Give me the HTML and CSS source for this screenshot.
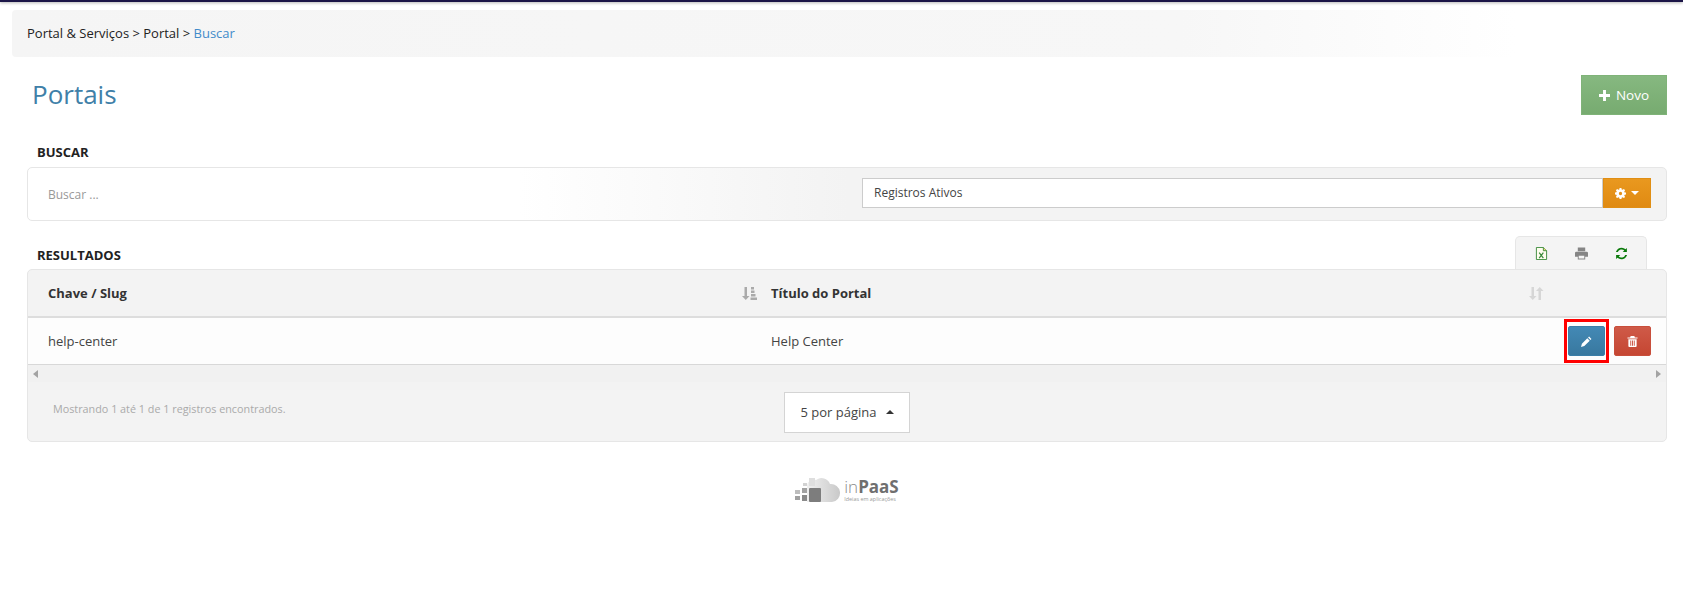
FILE: index.html
```html
<!DOCTYPE html>
<html lang="en">
<head>
    <meta charset="UTF-8">
    <title>Portais</title>
    <link rel="stylesheet" href="styles.css">
</head>
<body>
    <div class="top-bar"></div>

    <div class="breadcrumb">
        <span>Portal &amp; Serviços</span> &gt; <span>Portal</span> &gt; <a href="#" class="current">Buscar</a>
    </div>

    <div class="page">
        <div class="page-header">
            <h1>Portais</h1>
            <button class="btn-new">
                <svg class="icon-plus" viewBox="0 0 12 12"><path d="M4.400 0h3.200v4.400H12v3.200H7.600V12H4.400V7.600H0V4.400h4.400z"/></svg>
                Novo
            </button>
        </div>

        <h2 class="section-title search-title">BUSCAR</h2>
        <div class="search-panel">
            <span class="search-placeholder">Buscar ...</span>
            <div class="filter-group">
                <div class="filter-input">Registros Ativos</div>
                <button class="btn-gear">
                    <svg class="icon-gear" viewBox="0 0 12 12"><path fill-rule="evenodd" d="M5 0h2l.3 1.600 1 .4L9.700 1.100l1.300 1.300-.9 1.400.4 1L12 5v2l-1.500.3-.4 1 .9 1.400-1.300 1.300-1.400-.9-1 .4L7 12H5l-.3-1.500-1-.4-1.400.9L1 9.700l.9-1.400-.4-1L0 7V5l1.500-.3.4-1L1 2.400 2.300 1.100l1.400.9 1-.4zM6 4.200a1.800 1.800 0 1 0 0 3.600 1.800 1.800 0 0 0 0-3.600z"/></svg>
                    <span class="caret"></span>
                </button>
            </div>
        </div>

        <div class="results-header">
            <h2 class="section-title">RESULTADOS</h2>
            <div class="toolbar">
                <svg class="tool" viewBox="0 0 12 14"><path d="M.5.500h7.500l3.500 3.500v9.500H.5z" fill="#fffdf0" stroke="#3a8a3a"/><path d="M8 .5v3.500h3.500" fill="#f0d878" stroke="#3a8a3a"/><path d="M3.500 6l4.500 6M8 6l-4.500 6" stroke="#3a8a3a" stroke-width="1.300"/></svg>
                <svg class="tool" viewBox="0 0 14 13"><path d="M3 0h8v4H3zM1.500 4.500h11A1.500 1.500 0 0 1 14 6v4h-3v3H3v-3H0V6a1.500 1.500 0 0 1 1.500-1.500zM4 9v3h6V9z" fill="#858585"/></svg>
                <svg class="tool" viewBox="0 0 14 14"><path d="M12.800 1v4.500H8.300l1.700-1.700A4.300 4.300 0 0 0 3 5.500H1A6.300 6.300 0 0 1 11.300 2.500zM1.200 13V8.500h4.500L4 10.200a4.300 4.300 0 0 0 7-1.700h2A6.300 6.300 0 0 1 2.700 11.500z" fill="#0a7a0a"/></svg>
            </div>
        </div>

        <div class="results-panel">
            <div class="table-row table-head">
                <div class="col-slug">
                    <span>Chave / Slug</span>
                    <svg class="sort" viewBox="0 0 15 13"><path d="M2.500 0h2.500v9h2.500L3.750 13 0 9h2.500z"/><path d="M9 0h3v2.500H9zM9 3.500h3.500V6H9zM9 7h4.500v2.500H9zM8.500 10.500H15V13H8.500z"/></svg>
                </div>
                <div class="col-title">
                    <span>Título do Portal</span>
                    <svg class="sort sort-off" viewBox="0 0 15 13"><path d="M2.500 0h2.500v9h2.500L3.750 13 0 9h2.500z"/><path d="M9.500 13H12V4h2.500L10.750 0 7 4h2.500z"/></svg>
                </div>
                <div class="col-actions"></div>
            </div>
            <div class="table-row table-body">
                <div class="col-slug">help-center</div>
                <div class="col-title">Help Center</div>
                <div class="col-actions">
                    <div class="highlight">
                        <button class="btn-action btn-edit">
                            <svg viewBox="0 0 12 12"><path d="M8.800.600l2.600 2.600-1.100 1.100-2.600-2.600zM6.900 2.500l2.600 2.600L3.600 11 0 12l1-3.600z"/></svg>
                        </button>
                    </div>
                    <button class="btn-action btn-delete">
                        <svg viewBox="0 0 12 12"><path fill-rule="evenodd" d="M4 0h4l.6 1.500H11.500v1.200H.5V1.500h2.900zM1.500 3.500h9V11a1 1 0 0 1-1 1h-7a1 1 0 0 1-1-1zM3.600 5v5.500h1V5zM5.500 5v5.500h1V5zM7.400 5v5.500h1V5z"/></svg>
                    </button>
                </div>
            </div>
            <div class="scrollbar">
                <span class="arrow-left"></span>
                <span class="arrow-right"></span>
            </div>
            <div class="table-footer">
                <span class="records">Mostrando 1 até 1 de 1 registros encontrados.</span>
                <button class="page-size">5 por página <span class="caret-up"></span></button>
            </div>
        </div>

        <div class="logo">
            <svg class="logo-cloud" viewBox="0 0 46 27">
                <defs>
                    <linearGradient id="cloud-fill" x1="0" y1="0" x2="1" y2="0">
                        <stop offset="0" stop-color="#f0f0f0"/>
                        <stop offset="1" stop-color="#c9c9c9"/>
                    </linearGradient>
                </defs>
                <path d="M12 26V9a7 7 0 0 1 9-5 9 9 0 0 1 14 4 9 9 0 0 1 2 18z" fill="url(#cloud-fill)"/>
                <rect x="14" y="12" width="12" height="14" rx="1" fill="#7d7d7d"/>
                <rect x="7" y="12" width="5" height="5" fill="#a2a2a2"/>
                <rect x="7" y="19" width="5" height="6" fill="#8a8a8a"/>
                <rect x="0" y="14" width="5" height="4" fill="#bdbdbd"/>
                <rect x="0" y="20" width="5" height="4" fill="#a0a0a0"/>
                <rect x="14" y="2" width="6" height="8" fill="#dedede"/>
                <rect x="8" y="7" width="4" height="3" fill="#d2d2d2"/>
            </svg>
            <div class="logo-text">
                <div class="logo-name"><span class="logo-in">in</span><b>PaaS</b></div>
                <div class="logo-slogan">Ideias em aplicações</div>
            </div>
        </div>
    </div>
</body>
</html>
```

FILE: styles.css
```css
* {
    box-sizing: border-box;
}

body {
    margin: 0;
    font-family: "Open Sans", sans-serif;
    font-size: 13px;
    color: #333;
    background-color: #fff;
}

button {
    font-family: inherit;
    cursor: pointer;
}

.top-bar {
    height: 2px;
    background-color: #1b1547;
    box-shadow: 0 1px 3px rgba(0, 0, 0, 0.35);
}

.breadcrumb {
    height: 47px;
    margin: 8px 0 0 12px;
    padding-left: 15px;
    line-height: 47px;
    color: #222;
    background: linear-gradient(to right, #f5f5f5, #f7f7f7 70%, #fff 90%);
    border-radius: 4px 0 0 4px;
}

.current {
    color: #428bca;
    text-decoration: none;
}

.page {
    padding: 0 16px 0 27px;
}

.page-header {
    display: flex;
    justify-content: space-between;
    align-items: center;
    height: 40px;
    margin-top: 18px;
}

h1 {
    margin: 0 0 2px 5px;
    font-size: 26px;
    font-weight: 400;
    color: #4080a8;
}

.btn-new {
    display: flex;
    align-items: center;
    justify-content: center;
    gap: 6px;
    width: 86px;
    height: 40px;
    font-size: 13.500px;
    color: #fff;
    background: linear-gradient(#86b880, #77ab70);
    border: 1px solid #7fb378;
}

.icon-plus {
    width: 11px;
    height: 11px;
    fill: #fff;
}

.section-title {
    margin: 0;
    padding-left: 10px;
    font-size: 13px;
    font-weight: 700;
    color: #222;
}

.search-title {
    margin-top: 25px;
    padding-bottom: 3px;
    line-height: 24px;
}

.search-panel {
    display: flex;
    justify-content: space-between;
    align-items: center;
    height: 54px;
    padding: 0 15px 0 20px;
    background: linear-gradient(to right, #fff, #fff 30%, #f3f3f3 50%);
    border: 1px solid #e6e6e6;
    border-radius: 5px;
}

.search-placeholder {
    font-size: 12px;
    color: #999;
}

.filter-group {
    display: flex;
    width: 789px;
    height: 30px;
    margin-bottom: 2px;
}

.filter-input {
    flex: 1;
    padding-left: 11px;
    font-size: 12px;
    line-height: 28px;
    color: #444;
    background-color: #fff;
    border: 1px solid #ccc;
}

.btn-gear {
    display: flex;
    align-items: center;
    justify-content: center;
    gap: 5px;
    width: 48px;
    padding: 0;
    background: linear-gradient(#e9981f, #e08a12);
    border: 1px solid #e08e14;
}

.icon-gear {
    width: 11px;
    height: 11px;
    fill: #fff;
}

.caret {
    border-top: 4px solid #fff;
    border-left: 4px solid transparent;
    border-right: 4px solid transparent;
}

.results-header {
    display: flex;
    justify-content: space-between;
    align-items: flex-end;
    height: 48px;
    padding-right: 20px;
}

.results-header .section-title {
    line-height: 24px;
    margin-bottom: 2px;
}

.toolbar {
    display: flex;
    align-items: center;
    justify-content: space-around;
    width: 132px;
    height: 33px;
    padding: 0 5px;
    background-color: #f4f4f4;
    border: 1px solid #e6e6e6;
    border-bottom: none;
    border-radius: 5px 5px 0 0;
}

.tool {
    width: 13px;
    height: 13px;
}

.results-panel {
    height: 173px;
    background-color: #f3f3f3;
    border: 1px solid #e6e6e6;
    border-radius: 5px;
}

.table-row {
    display: flex;
    align-items: center;
}

.table-head {
    height: 48px;
    font-weight: 700;
    font-size: 13px;
    border-bottom: 2px solid #ddd;
}

.table-body {
    height: 47px;
    font-size: 13px;
    color: #444;
    background-color: #fdfdfd;
    border-bottom: 1px solid #d8d8d8;
}

.col-slug {
    display: flex;
    justify-content: space-between;
    align-items: center;
    width: 743px;
    padding: 0 14px 0 20px;
}

.col-title {
    display: flex;
    justify-content: space-between;
    align-items: center;
    width: 794px;
    padding-right: 21px;
}

.col-actions {
    flex: 1;
    display: flex;
    align-items: center;
    gap: 5px;
}

.sort {
    width: 15px;
    height: 13px;
    fill: #aaa;
}

.sort-off {
    fill: #d6d6d6;
}

.highlight {
    display: flex;
    align-items: center;
    justify-content: center;
    width: 45px;
    height: 44px;
    margin-left: -1px;
    border: 3px solid #f00;
}

.btn-action {
    display: flex;
    align-items: center;
    justify-content: center;
    width: 37px;
    height: 30px;
    padding: 0;
    border-radius: 2px;
}

.btn-action svg {
    width: 11px;
    height: 11px;
    fill: #fff;
}

.btn-edit {
    background: linear-gradient(#4389b5, #38789f);
    border: 1px solid #3b7ea8;
}

.btn-delete {
    background: linear-gradient(#cf5a48, #c54632);
    border: 1px solid #c84e3b;
}

.scrollbar {
    display: flex;
    justify-content: space-between;
    align-items: center;
    height: 17px;
    padding: 0 5px;
    background-color: #f1f1f1;
}

.arrow-left {
    border-right: 5px solid #a3a3a3;
    border-top: 4px solid transparent;
    border-bottom: 4px solid transparent;
}

.arrow-right {
    border-left: 5px solid #a3a3a3;
    border-top: 4px solid transparent;
    border-bottom: 4px solid transparent;
}

.table-footer {
    display: flex;
    align-items: center;
    height: 58px;
    padding-left: 25px;
}

.records {
    width: 731px;
    font-size: 10.800px;
    color: #aaa;
    margin-top: -6px;
}

.page-size {
    display: flex;
    align-items: center;
    justify-content: center;
    gap: 9px;
    width: 126px;
    height: 41px;
    margin-top: 2px;
    padding: 0;
    font-size: 13px;
    color: #444;
    background-color: #fff;
    border: 1px solid #d4d4d4;
}

.caret-up {
    border-bottom: 4px solid #333;
    border-left: 4px solid transparent;
    border-right: 4px solid transparent;
}

.logo {
    display: flex;
    justify-content: center;
    align-items: center;
    gap: 3px;
    margin-top: 34px;
}

.logo-cloud {
    width: 46px;
    height: 27px;
}

.logo-text {
    color: #6f6f6f;
}

.logo-name {
    font-size: 17px;
    line-height: 19px;
}

.logo-in {
    font-weight: 300;
    color: #8a8a8a;
}

.logo-slogan {
    font-size: 5.400px;
    line-height: 7px;
    color: #999;
}
```
